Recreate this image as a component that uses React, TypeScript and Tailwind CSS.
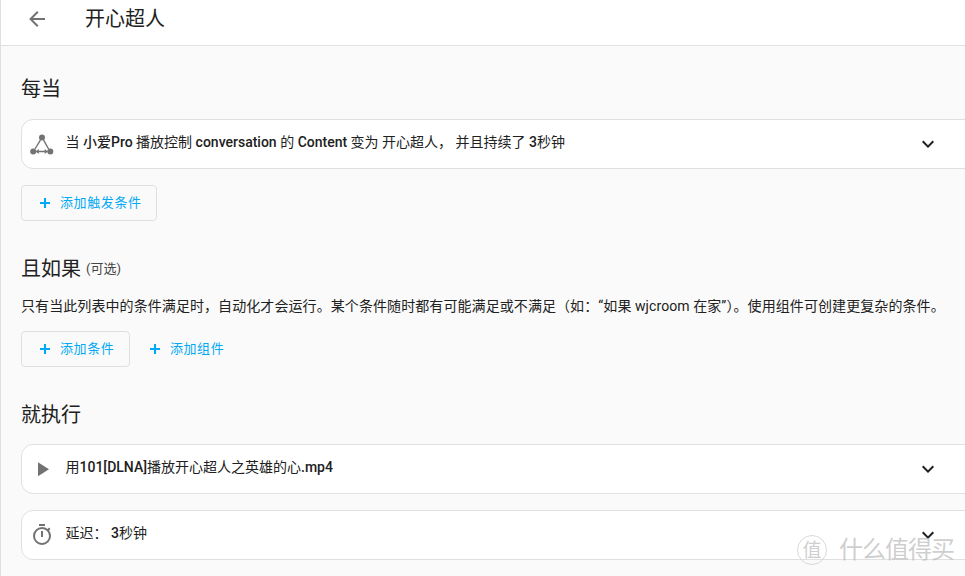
import React from 'react';

const FONT = "font-['Roboto','Noto_Sans_CJK_SC',sans-serif]";

const ArrowLeft = () => (
  <svg viewBox="0 0 24 24" className="w-6 h-6 fill-[#727272]">
    <path d="M20 11v2H8l5.5 5.5-1.42 1.42L4.16 12l7.92-7.92L13.5 5.5 8 11h12z" />
  </svg>
);

const Chevron = () => (
  <svg viewBox="0 0 24 24" className="w-6 h-6 fill-[#212121] shrink-0">
    <path d="M7.41 8.58 12 13.17l4.59-4.59L18 10l-6 6-6-6 1.41-1.42z" />
  </svg>
);

const Plus = () => (
  <svg viewBox="0 0 24 24" className="w-[18px] h-[18px] fill-[#03a9f4] shrink-0">
    <path d="M18.7 13.4h-5.3v5.3h-2.8v-5.3H5.3v-2.8h5.3V5.3h2.8v5.3h5.3z" />
  </svg>
);

const TriggerIcon = () => (
  <svg viewBox="0 0 24 24" className="w-6 h-6 text-[#727272]">
    <circle cx="12" cy="5.5" r="3" fill="currentColor" />
    <circle cx="3.2" cy="19.5" r="3" fill="currentColor" />
    <circle cx="20.3" cy="19.5" r="3" fill="currentColor" />
    <path d="M10.4 8.2 5 17M13.6 8.2l5 8.8M6 19.5h11.5" stroke="currentColor" strokeWidth="1.4" fill="none" />
    <path d="M8.8 17v5l-3-2.5zM14.7 17v5l3-2.5z" fill="currentColor" />
  </svg>
);

const PlayIcon = () => (
  <svg viewBox="0 0 24 24" className="w-6 h-6 fill-[#727272]">
    <path d="M8 5.14v14l11-7-11-7z" />
  </svg>
);

const TimerIcon = () => (
  <svg viewBox="0 0 24 24" className="w-6 h-6 fill-[#727272]">
    <path d="M12 20a7 7 0 1 1 0-14 7 7 0 0 1 0 14zm7.03-12.61 1.42-1.42c-.45-.51-.9-.97-1.41-1.41l-1.42 1.44A8.96 8.96 0 0 0 12 4a9 9 0 1 0 9 9c0-2.12-.74-4.07-1.97-5.61zM11 14h2V8h-2v6zm4-13H9v2h6V1z" />
  </svg>
);

// latin runs render medium, the CJK around them stays regular
const M = ({ children }: { children: React.ReactNode }) => <span className="font-medium">{children}</span>;

const Row = ({ icon, children }: { icon: React.ReactNode; children: React.ReactNode }) => (
  <div className="h-[50px] mr-[-20px] flex items-center pl-2 pr-11 bg-white border border-[#e0e0e0] rounded-xl">
    <div className="w-6 flex justify-center shrink-0">{icon}</div>
    <div className="ml-[11.5px] pb-1 flex-1 text-sm text-[#212121] whitespace-nowrap">{children}</div>
    <Chevron />
  </div>
);

const AddButton = ({ label, outlined = true }: { label: string; outlined?: boolean }) => (
  <button
    className={
      outlined
        ? 'h-9 pl-[14px] pr-[14.5px] flex items-center gap-[6px] bg-transparent border border-[#e0e0e0] rounded text-[13px] tracking-[0.6px] text-[#03a9f4]'
        : 'h-9 pl-4 flex items-center gap-[6px] text-[13px] tracking-[0.6px] text-[#03a9f4]'
    }
  >
    <Plus />
    <span>{label}</span>
  </button>
);

export default function App() {
  return (
    <div className={`${FONT} relative w-[965px] h-[576px] overflow-hidden bg-[#fafafa] border-l border-[#e0e0e0]`}>
      <header className="h-[46px] bg-white border-b border-[#e0e0e0] flex items-center pl-6 pb-[7px]">
        <ArrowLeft />
        <h1 className="ml-9 text-xl leading-6 text-[#212121]">开心超人</h1>
      </header>

      <main className="pl-5">
        <h2 className="mt-[31px] text-xl leading-6 text-[#212121]">每当</h2>
        <div className="mt-[18px]">
          <Row icon={<TriggerIcon />}>
            当 <M>小爱Pro</M> 播放控制 <M>conversation</M> 的 <M>Content</M> 变为 开心超人， 并且持续了 <M>3</M>秒钟
          </Row>
        </div>
        <div className="mt-4 flex">
          <AddButton label="添加触发条件" />
        </div>

        <h2 className="mt-[36px] text-xl leading-6 text-[#212121]">
          且如果 <span className="relative top-[-3px] text-[13px] text-[#444]">(可选)</span>
        </h2>
        <p className="mt-3 text-sm leading-5 tracking-[0.08px] text-[#212121] whitespace-nowrap">
          只有当此列表中的条件满足时，自动化才会运行。某个条件随时都有可能满足或不满足（如：“如果 wjcroom 在家”）。使用组件可创建更复杂的条件。
        </p>
        <div className="mt-[15px] flex">
          <AddButton label="添加条件" />
          <AddButton label="添加组件" outlined={false} />
        </div>

        <h2 className="mt-[36px] text-xl leading-6 text-[#212121]">就执行</h2>
        <div className="mt-[17px] flex flex-col gap-4">
          <Row icon={<PlayIcon />}>
            用<M>101[DLNA]</M>播放开心超人之英雄的心<M>.mp4</M>
          </Row>
          <Row icon={<TimerIcon />}>
            延迟： <M>3</M>秒钟
          </Row>
        </div>
      </main>

      {/* watermark */}
      <div className="absolute left-[796px] top-[535px] flex items-center gap-[12px] text-[#b9b9b9]/70 select-none">
        <span className="w-[30px] h-[30px] rounded-full border border-[#c9c9c9]/70 flex items-center justify-center text-[19px] leading-none">值</span>
        <span className="text-[24px] leading-7 tracking-[-1px]">什么值得买</span>
      </div>
    </div>
  );
}
